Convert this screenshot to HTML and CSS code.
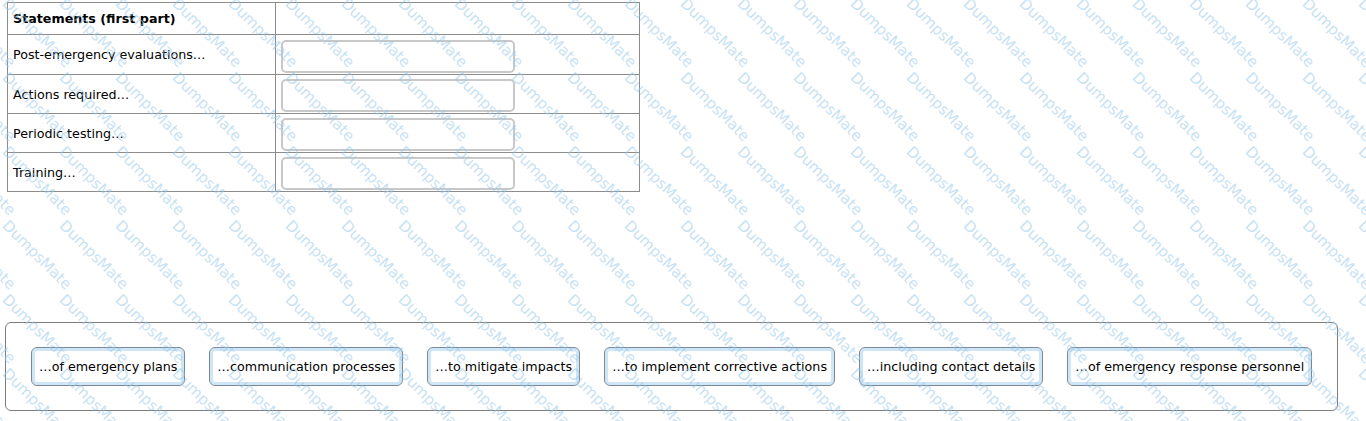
FILE: index.html
```html
<!DOCTYPE html>
<html lang="en">
<head>
    <meta charset="UTF-8">
    <meta name="viewport" content="width=device-width, initial-scale=1.0">
    <title>Drag and drop: emergency plan statements</title>
    <link rel="stylesheet" href="styles.css">
</head>
<body>
    <!-- Matching table -->
    <table class="match-table">
        <colgroup>
            <col class="col-stmt">
            <col class="col-slot">
        </colgroup>
        <thead>
            <tr><th>Statements (first part)</th><th></th></tr>
        </thead>
        <tbody>
            <tr><td class="stmt">Post-emergency evaluations…</td><td class="slot-cell"><div class="drop-slot"></div></td></tr>
            <tr><td class="stmt">Actions required…</td><td class="slot-cell"><div class="drop-slot"></div></td></tr>
            <tr><td class="stmt">Periodic testing…</td><td class="slot-cell"><div class="drop-slot"></div></td></tr>
            <tr><td class="stmt">Training…</td><td class="slot-cell"><div class="drop-slot"></div></td></tr>
        </tbody>
    </table>

    <!-- Answer choices -->
    <div class="answer-bank">
        <button class="answer">…of emergency plans</button>
        <button class="answer">…communication processes</button>
        <button class="answer">…to mitigate impacts</button>
        <button class="answer">…to implement corrective actions</button>
        <button class="answer">…including contact details</button>
        <button class="answer">…of emergency response personnel</button>
    </div>

    <div id="watermark"></div>

    <script>
        // Diagonal watermark tiles
        const mark = document.getElementById('watermark');
        for (let r = -1; r < 7; r++) {
            for (let c = -2; c < 26; c++) {
                const tile = document.createElement('span');
                tile.textContent = 'DumpsMate';
                tile.style.left = (10 + c * 56.5) + 'px';
                tile.style.top = (-4 + r * 74) + 'px';
                mark.appendChild(tile);
            }
        }
    </script>
</body>
</html>
```

FILE: styles.css
```css
body {
    margin: 0;
    font-family: 'DejaVu Sans', Verdana, sans-serif;
    font-size: 12.7px;
    color: #000;
    background: #fff;
}

/* Таблица сопоставления */
.match-table {
    margin: 2px 0 0 7px;
    width: 632px;
    table-layout: fixed;
    border-collapse: collapse;
    border: 1px solid #8c8c8c;
}

.col-stmt {
    width: 268px;
}

.col-slot {
    width: 364px;
}

.match-table th {
    text-align: left;
    font-weight: bold;
    padding: 8px 5px;
    line-height: 15px;
    border: 1px solid #8c8c8c;
}

.match-table td {
    border: 1px solid #8c8c8c;
}

.stmt {
    padding: 0 5px;
    vertical-align: middle;
}

.slot-cell {
    padding: 4px 6px 1px 5px;
}

tbody tr:first-child .slot-cell {
    padding-top: 5px;
}

.drop-slot {
    width: 234px;
    height: 33px;
    box-sizing: border-box;
    border: 2px solid #c8c8c8;
    border-radius: 5px;
}

/* Варианты ответов */
.answer-bank {
    display: flex;
    align-items: center;
    gap: 24px;
    margin: 130px 28px 0 5px;
    padding: 24px 25px;
    border: 1px solid #7d7d7d;
    border-radius: 6px;
}

.answer {
    height: 39px;
    padding: 0 7px;
    font-family: inherit;
    font-size: inherit;
    color: #000;
    background: #fff;
    border: 1px solid #7b8893;
    border-radius: 6px;
    box-shadow: inset 0 0 0 3px #cfe6f7;
    cursor: pointer;
    white-space: nowrap;
}

/* Водяной знак поверх страницы */
#watermark {
    position: absolute;
    top: 0;
    left: 0;
    width: 100%;
    height: 421px;
    overflow: hidden;
    pointer-events: none;
    z-index: 10;
}

#watermark span {
    position: absolute;
    font-family: 'DejaVu Sans', sans-serif;
    font-size: 15px;
    line-height: 1;
    color: rgba(150, 200, 235, 0.55);
    transform: rotate(45deg);
    transform-origin: 0 0;
    white-space: nowrap;
}
```
